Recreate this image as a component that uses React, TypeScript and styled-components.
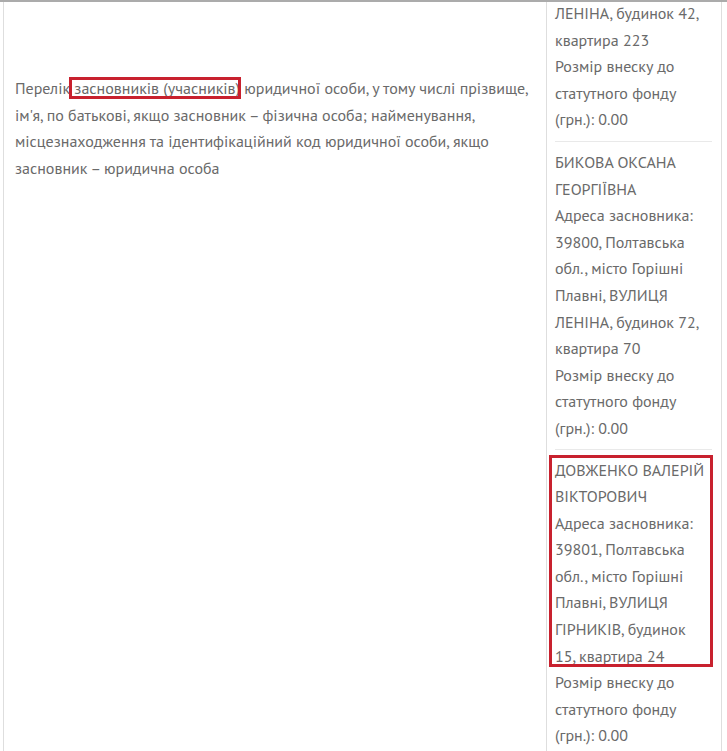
import React from "react";
import styled, { createGlobalStyle } from "styled-components";

const GlobalStyle = createGlobalStyle`
  html, body {
    margin: 0;
    padding: 0;
    background: #ffffff;
  }
  body {
    font-family: "PT Sans", "Open Sans", "Noto Sans", sans-serif;
    font-size: 16px;
    line-height: 26.6px;
    color: #6a6a6a;
  }
`;

const Page = styled.div`
  border-top: 2px solid #ababab;
  padding-left: 3px;
  height: 749px;
  overflow: hidden;
`;

const Table = styled.div`
  display: grid;
  grid-template-columns: 542px 175px;
  width: max-content;
  border-left: 1px solid #dedede;
  border-right: 1px solid #dedede;
  min-height: 760px;
`;

const LabelCell = styled.div`
  padding: 73px 11px 0 11px;
`;

const ValueCell = styled.div`
  border-left: 1px solid #dedede;
  padding: 0 9px 0 8px;
  margin-top: -2px;
  white-space: nowrap;
`;

const Mark = styled.span`
  outline: 3px solid #c8212e;
  outline-offset: -2px;
`;

const Founder = styled.div`
  padding: 7px 0 7px;
  & + & {
    border-top: 1px solid #e9e9e9;
  }
`;

const FirstFounder = styled(Founder)`
  padding-top: 0;
  padding-bottom: 8px;
`;

const Boxed = styled.div`
  position: relative;
  &::after {
    content: "";
    position: absolute;
    left: -6px;
    right: -1px;
    top: -2px;
    bottom: 2px;
    border: 3px solid #c8212e;
    pointer-events: none;
  }
`;

const Line = styled.div``;

export default function App() {
  return (
    <>
      <GlobalStyle />
      <Page>
        <Table>
          <LabelCell>
            Перелік<Mark> засновників (учасників)</Mark> юридичної особи, у
            тому числі прізвище, ім'я, по батькові, якщо засновник – фізична
            особа; найменування, місцезнаходження та ідентифікаційний код
            юридичної особи, якщо засновник – юридична особа
          </LabelCell>
          <ValueCell>
            <FirstFounder>
              <Line>ЛЕНІНА, будинок 42,<br />квартира 223</Line>
              <Line>Розмір внеску до<br />статутного фонду<br />(грн.): 0.00</Line>
            </FirstFounder>
            <Founder>
              <Line>БИКОВА ОКСАНА<br />ГЕОРГІЇВНА</Line>
              <Line>
                Адреса засновника:<br />39800, Полтавська<br />обл., місто Горішні<br />
                Плавні, ВУЛИЦЯ<br />ЛЕНІНА, будинок 72,<br />квартира 70
              </Line>
              <Line>Розмір внеску до<br />статутного фонду<br />(грн.): 0.00</Line>
            </Founder>
            <Founder>
              <Boxed>
                <Line>ДОВЖЕНКО ВАЛЕРІЙ<br />ВІКТОРОВИЧ</Line>
                <Line>
                  Адреса засновника:<br />39801, Полтавська<br />обл., місто Горішні<br />
                  Плавні, ВУЛИЦЯ<br />ГІРНИКІВ, будинок<br />15, квартира 24
                </Line>
              </Boxed>
              <Line>Розмір внеску до<br />статутного фонду<br />(грн.): 0.00</Line>
            </Founder>
          </ValueCell>
        </Table>
      </Page>
    </>
  );
}
